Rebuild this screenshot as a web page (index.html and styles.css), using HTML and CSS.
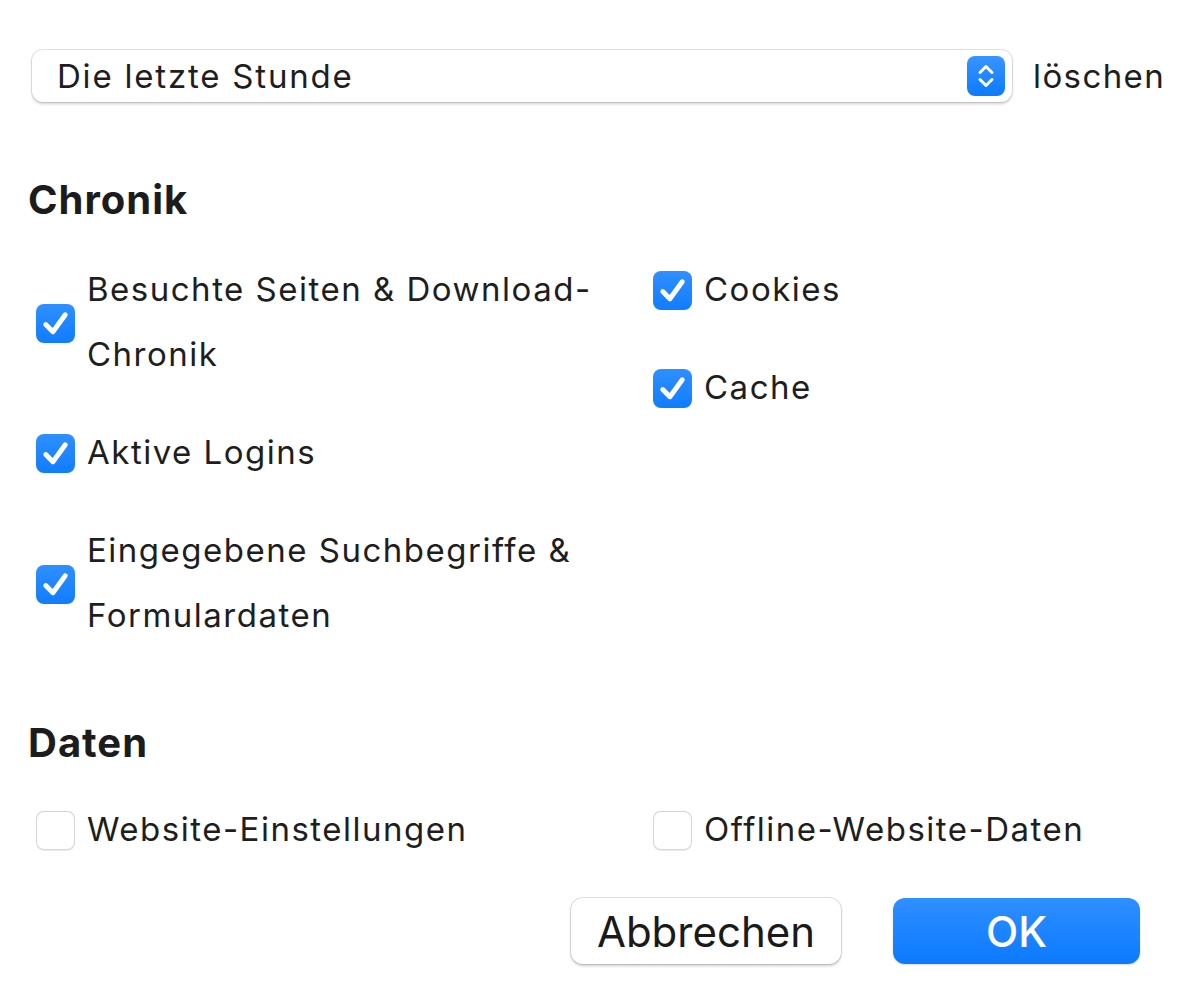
FILE: index.html
```html
<!DOCTYPE html>
<html lang="de">
<head>
<meta charset="utf-8">
<title>Verlauf löschen</title>
<link rel="stylesheet" href="styles.css">
</head>
<body>
<div class="dialog">
  <div class="range-row">
    <div class="select">
      <span class="select-value">Die letzte Stunde</span>
      <span class="stepper">
        <svg width="38" height="40" viewBox="0 0 38 40">
          <path d="M13 16.5 L19 10.5 L25 16.5" fill="none" stroke="#fff" stroke-width="3" stroke-linecap="round" stroke-linejoin="round"/>
          <path d="M13 23.5 L19 29.5 L25 23.5" fill="none" stroke="#fff" stroke-width="3" stroke-linecap="round" stroke-linejoin="round"/>
        </svg>
      </span>
    </div>
    <span class="range-label">löschen</span>
  </div>

  <h2 class="section-title chronik-title">Chronik</h2>
  <div class="options">
    <div class="col">
      <label class="opt"><span class="box checked"><svg viewBox="0 0 38 38"><path d="M9.5 20 L16.5 27 L28.5 10.5" fill="none" stroke="#fff" stroke-width="4.8" stroke-linecap="round" stroke-linejoin="round"/></svg></span><span class="text">Besuchte Seiten &amp; Download-<br>Chronik</span></label>
      <label class="opt"><span class="box checked"><svg viewBox="0 0 38 38"><path d="M9.5 20 L16.5 27 L28.5 10.5" fill="none" stroke="#fff" stroke-width="4.8" stroke-linecap="round" stroke-linejoin="round"/></svg></span><span class="text">Aktive Logins</span></label>
      <label class="opt"><span class="box checked"><svg viewBox="0 0 38 38"><path d="M9.5 20 L16.5 27 L28.5 10.5" fill="none" stroke="#fff" stroke-width="4.8" stroke-linecap="round" stroke-linejoin="round"/></svg></span><span class="text">Eingegebene Suchbegriffe &amp;<br>Formulardaten</span></label>
    </div>
    <div class="col">
      <label class="opt"><span class="box checked"><svg viewBox="0 0 38 38"><path d="M9.5 20 L16.5 27 L28.5 10.5" fill="none" stroke="#fff" stroke-width="4.8" stroke-linecap="round" stroke-linejoin="round"/></svg></span><span class="text">Cookies</span></label>
      <label class="opt"><span class="box checked"><svg viewBox="0 0 38 38"><path d="M9.5 20 L16.5 27 L28.5 10.5" fill="none" stroke="#fff" stroke-width="4.8" stroke-linecap="round" stroke-linejoin="round"/></svg></span><span class="text">Cache</span></label>
    </div>
  </div>

  <h2 class="section-title daten-title">Daten</h2>
  <div class="options">
    <div class="col">
      <label class="opt"><span class="box"></span><span class="text">Website-Einstellungen</span></label>
    </div>
    <div class="col">
      <label class="opt"><span class="box"></span><span class="text">Offline-Website-Daten</span></label>
    </div>
  </div>

  <div class="buttons">
    <button class="btn btn-cancel">Abbrechen</button>
    <button class="btn btn-ok">OK</button>
  </div>
</div>
</body>
</html>
```

FILE: styles.css
```css
html, body {
  margin: 0;
  padding: 0;
  background: #ffffff;
}

body {
  font-family: "Inter", "Liberation Sans", sans-serif;
  color: #1e1e1e;
  width: 1200px;
  height: 1005px;
  overflow: hidden;
}

.dialog {
  padding: 50px 0 0 0;
}

.range-row {
  display: flex;
  align-items: center;
  padding-left: 32px;
}

.select {
  width: 980px;
  height: 52px;
  box-sizing: border-box;
  border-radius: 11px;
  background: #fff;
  box-shadow: 0 0 0 1px rgba(0,0,0,0.09), 0 1.5px 3px rgba(0,0,0,0.18);
  display: flex;
  align-items: center;
  justify-content: space-between;
  padding: 0 7px 0 25px;
}

.select-value {
  font-size: 33px;
  letter-spacing: 1.8px;
}

.stepper {
  width: 38px;
  height: 40px;
  border-radius: 8px;
  background: linear-gradient(#3a94ff, #0a7bff);
  display: block;
}

.stepper svg {
  display: block;
}

.range-label {
  margin-left: 21px;
  font-size: 33px;
  letter-spacing: 1.4px;
}

.section-title {
  margin: 0;
  font-size: 40px;
  font-weight: 700;
  line-height: 40px;
  letter-spacing: 1px;
  padding-left: 28px;
  color: #1c1c1c;
}

.chronik-title {
  margin-top: 78px;
}

.options {
  display: grid;
  grid-template-columns: 617px 1fr;
  padding-left: 36px;
}

.chronik-title + .options {
  margin-top: 37px;
}

.col {
  display: flex;
  flex-direction: column;
  gap: 33px;
}

.opt {
  display: flex;
  align-items: center;
  gap: 12px;
}

.text {
  font-size: 33px;
  line-height: 65px;
  letter-spacing: 1.5px;
}

.box {
  width: 39px;
  height: 39px;
  flex: none;
  margin-top: 2px;
  box-sizing: border-box;
  border-radius: 8px;
  background: #fff;
  box-shadow: inset 0 0 0 1px rgba(0,0,0,0.16), 0 0.5px 1px rgba(0,0,0,0.08);
}

.box.checked {
  background: linear-gradient(#2f8fff, #107dff);
  box-shadow: none;
}

.box svg {
  display: block;
  width: 39px;
  height: 39px;
}

.daten-title {
  margin-top: 75px;
}

.daten-title + .options {
  margin-top: 34px;
}

.buttons {
  display: flex;
  justify-content: flex-end;
  gap: 52px;
  padding-right: 60px;
  margin-top: 36px;
}

.btn {
  font-family: "Inter", "Liberation Sans", sans-serif;
  font-size: 42px;
  height: 66px;
  border-radius: 12px;
  border: none;
  padding: 0;
  cursor: default;
}

.btn-cancel {
  width: 270px;
  background: #fff;
  color: #1a1a1a;
  box-shadow: 0 0 0 1px rgba(0,0,0,0.1), 0 1.5px 3px rgba(0,0,0,0.2);
}

.btn-ok {
  width: 247px;
  color: #fff;
  font-weight: 500;
  background: linear-gradient(#2f8fff, #0b7aff);
  box-shadow: 0 1px 2px rgba(0,0,0,0.15);
}
```
